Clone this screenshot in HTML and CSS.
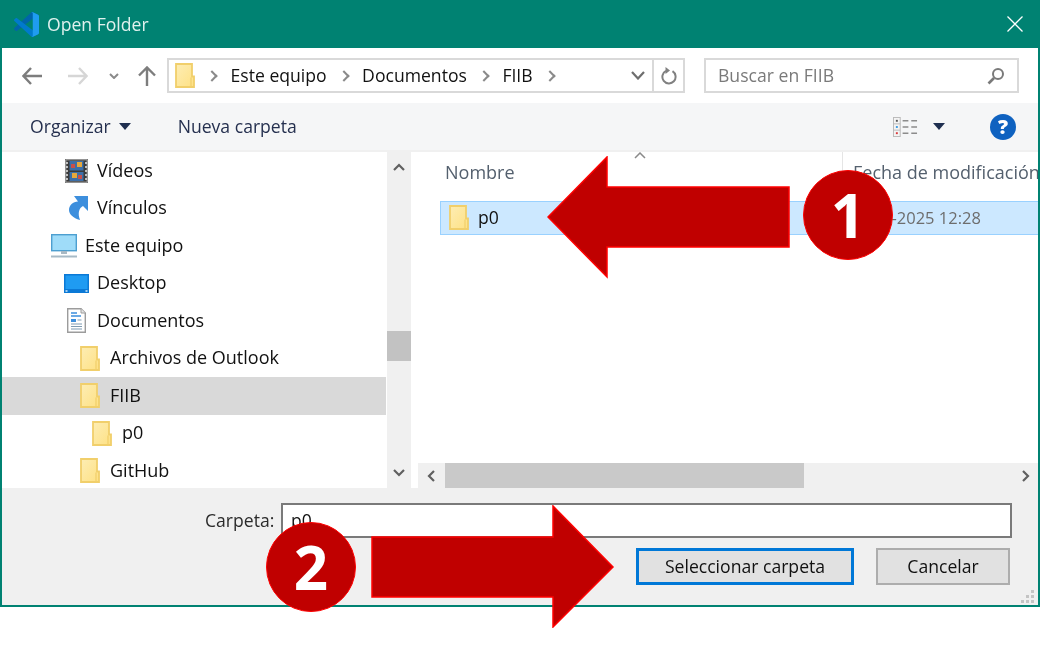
FILE: index.html
```html
<!DOCTYPE html>
<html lang="es">

<head>
    <meta charset="UTF-8">
    <meta name="viewport" content="width=device-width, initial-scale=1.0">
    <title>Open Folder</title>
    <link rel="stylesheet" href="styles.css">
</head>

<body>
    <svg class="defs" width="0" height="0" aria-hidden="true">
        <linearGradient id="folderFill" x1="0" y1="0" x2="1" y2="1">
            <stop offset="0" stop-color="#fdedb4"/>
            <stop offset="1" stop-color="#fee184"/>
        </linearGradient>
        <symbol id="folder" viewBox="0 0 20 25">
            <path d="M1 1H17V13.500H19V24H1Z" fill="url(#folderFill)" stroke="#f1cf6b" stroke-width="1.800"/>
            <path d="M16 14.500V23" stroke="#f1cf6b" stroke-width="1.200"/>
        </symbol>
    </svg>

    <div class="dialog">
        <div class="titlebar">
            <svg class="app-logo" viewBox="0 0 100 100">
                <path fill="#0065A9" d="M96.46 10.8 75.86.88C73.47-.27 70.62.21 68.75 2.08L1.3 63.58c-1.82 1.66-1.81 4.51 0 6.16l5.51 5.01c1.49 1.35 3.72 1.45 5.32.24L93.36 13.37C96.09 11.3 100 13.25 100 16.67v-.24c0-2.4-1.38-4.59-3.54-5.63Z"/>
                <path fill="#007ACC" d="M96.46 89.2 75.86 99.12c-2.39 1.15-5.24.67-7.11-1.2L1.3 36.42c-1.82-1.66-1.81-4.51 0-6.16l5.51-5.01c1.49-1.35 3.72-1.45 5.32-.24L93.36 86.63c2.73 2.07 6.64.12 6.64-3.3v.24c0 2.4-1.38 4.59-3.54 5.63Z"/>
                <path fill="#1F9CF0" d="M75.86 99.13c-2.39 1.15-5.24.66-7.11-1.21C71.06 100.22 75 98.59 75 95.33V4.67C75 1.41 71.06-.22 68.75 2.08 70.62.21 73.47-.27 75.86.87l20.6 9.91C98.62 11.82 100 14.01 100 16.41v67.18c0 2.4-1.38 4.59-3.54 5.63Z"/>
            </svg>
            <span class="title">Open Folder</span>
            <svg class="close" viewBox="0 0 16 16"><path d="M.5.5 15.500 15.500M15.500.5.5 15.500" stroke="#fff" stroke-width="1.300" fill="none"/></svg>
        </div>

        <div class="addressbar">
            <svg class="nav-btn back" viewBox="0 0 20 18"><path d="M9 1 1.500 9 9 17M2 9H20" stroke="#7d7d7d" stroke-width="2.400" fill="none"/></svg>
            <svg class="nav-btn forward" viewBox="0 0 20 18"><path d="M11 1 18.500 9 11 17M18 9H0" stroke="#d6d6d6" stroke-width="2.400" fill="none"/></svg>
            <svg class="nav-btn recent" viewBox="0 0 10 6"><path d="M1 1 5 5 9 1" stroke="#8a8a8a" stroke-width="2" fill="none"/></svg>
            <svg class="nav-btn up" viewBox="0 0 18 20"><path d="M1 9.500 9 1.500 17 9.500M9 2V20" stroke="#7d7d7d" stroke-width="2.400" fill="none"/></svg>

            <div class="crumbs">
                <svg class="crumb-folder"><use href="#folder"/></svg>
                <span class="sep"></span>
                <span class="crumb">Este equipo</span>
                <span class="sep"></span>
                <span class="crumb">Documentos</span>
                <span class="sep"></span>
                <span class="crumb">FIIB</span>
                <span class="sep"></span>
                <svg class="crumb-drop" viewBox="0 0 14 9"><path d="M1 1 7 7.500 13 1" stroke="#6e6e6e" stroke-width="2.200" fill="none"/></svg>
                <span class="refresh">
                    <svg viewBox="0 0 16 18" width="16" height="18"><path d="M11.500 4.200A6.600 6.600 0 1 1 5 3.900" stroke="#808080" stroke-width="2" fill="none"/><path d="M4.500 0V7L9 3.500Z" fill="#808080"/></svg>
                </span>
            </div>

            <div class="search">
                <span class="search-text">Buscar en FIIB</span>
                <svg viewBox="0 0 18 18" width="18" height="18"><circle cx="11" cy="7" r="5" stroke="#7a7a7a" stroke-width="2" fill="none"/><path d="M7 11 1.500 16.500" stroke="#7a7a7a" stroke-width="2.600"/></svg>
            </div>
        </div>

        <div class="toolbar">
            <button class="tool">Organizar<i class="caret"></i></button>
            <button class="tool new-folder">Nueva carpeta</button>
            <svg class="view-icon" viewBox="0 0 26 21" preserveAspectRatio="none">
                <rect x=".5" y=".5" width="7" height="20" fill="#f4f4f4" stroke="#b9b9b9"/>
                <path d="M.5 7.200h7M.5 13.800h7" stroke="#b9b9b9"/>
                <rect x="3" y="3" width="2" height="2" fill="#555"/>
                <rect x="3" y="9.500" width="2" height="2" fill="#3c9be0"/>
                <rect x="3" y="16" width="2" height="2" fill="#d8383a"/>
                <path d="M10 4h6M19 4h6M10 10.500h6M19 10.500h6M10 17h6M19 17h6" stroke="#8c8c8c" stroke-width="1.600"/>
            </svg>
            <i class="caret view-caret"></i>
            <span class="help">?</span>
        </div>

        <div class="panes">
            <div class="nav-pane">
                <div class="tree-row depth-1">
                    <svg class="tree-icon ic-video" viewBox="0 0 23 24">
                        <rect width="23" height="24" fill="#3b3b3b"/>
                        <rect x=".8" y=".8" width="21.400" height="22.400" fill="none" stroke="#b8b8b8"/>
                        <rect x="4.500" y="2" width="14" height="9.500" fill="#3d6fa8"/>
                        <rect x="4.500" y="13" width="14" height="9" fill="#3d6fa8"/>
                        <path d="M12 3h5v5h-5ZM7 14h5v5H7Z" fill="#e7a83c"/>
                        <path d="M6 5h4v4H6ZM13 16h4v4h-4Z" fill="#c9504b"/>
                        <path d="M2 3v18M21 3v18" stroke="#e8e8e8" stroke-width="1.500" stroke-dasharray="2 2"/>
                    </svg>
                    <span>Vídeos</span>
                </div>
                <div class="tree-row depth-1">
                    <svg class="tree-icon ic-link" viewBox="0 0 19 24">
                        <path d="M19 0V15L14 10C10 12 8.500 17 11 24 4 22 0 18 0 14 0 9 4 6 9 5.500L5 0Z" fill="#3d8fdd"/>
                    </svg>
                    <span>Vínculos</span>
                </div>
                <div class="tree-row depth-0">
                    <svg class="tree-icon ic-pc" viewBox="0 0 26 24">
                        <rect x=".7" y=".7" width="24.600" height="16" fill="#9fdcf9" stroke="#4d9fd0" stroke-width="1.400"/>
                        <path d="M10 17h6v3h-6Z" fill="#a9b9c4"/>
                        <path d="M0 21.500h26v2H0Z" fill="#a7bac6"/>
                    </svg>
                    <span>Este equipo</span>
                </div>
                <div class="tree-row depth-1">
                    <svg class="tree-icon ic-desktop" viewBox="0 0 25 19">
                        <rect width="25" height="19" fill="#0b79d6"/>
                        <rect x="1.500" y="1.500" width="22" height="13.500" fill="#1f9bf2"/>
                        <path d="M1.500 17h2M21.500 17h2" stroke="#d5ecfb" stroke-width="1.400"/>
                    </svg>
                    <span>Desktop</span>
                </div>
                <div class="tree-row depth-1">
                    <svg class="tree-icon ic-doc" viewBox="0 0 19 25">
                        <path d="M.7.7H14L18.300 5V24.300H.7Z" fill="#fff" stroke="#9c9c9c" stroke-width="1.400"/>
                        <path d="M14 .7V5H18.300" fill="#e6e6e6" stroke="#9c9c9c"/>
                        <path d="M4 5h6M4 8h10" stroke="#3d8fdd" stroke-width="1.400"/>
                        <path d="M4 11h5v3H4Z" fill="#3d8fdd"/>
                        <path d="M10.500 12h4M4 16h11M4 18.500h11M4 21h11" stroke="#7f9cb3" stroke-width="1.200"/>
                    </svg>
                    <span>Documentos</span>
                </div>
                <div class="tree-row depth-2">
                    <svg class="tree-icon ic-folder"><use href="#folder"/></svg>
                    <span>Archivos de Outlook</span>
                </div>
                <div class="tree-row depth-2 active">
                    <svg class="tree-icon ic-folder"><use href="#folder"/></svg>
                    <span>FIIB</span>
                </div>
                <div class="tree-row depth-3">
                    <svg class="tree-icon ic-folder"><use href="#folder"/></svg>
                    <span>p0</span>
                </div>
                <div class="tree-row depth-2">
                    <svg class="tree-icon ic-folder"><use href="#folder"/></svg>
                    <span>GitHub</span>
                </div>
            </div>

            <div class="vscroll">
                <svg class="arrow-btn" viewBox="0 0 12 8" width="12" height="8"><path d="M1 7 6 2 11 7" stroke="#606060" stroke-width="2.200" fill="none"/></svg>
                <div class="vtrack"><div class="vthumb"></div></div>
                <svg class="arrow-btn" viewBox="0 0 12 8" width="12" height="8"><path d="M1 1 6 6 11 1" stroke="#606060" stroke-width="2.200" fill="none"/></svg>
            </div>

            <div class="list-pane">
                <div class="list">
                    <div class="list-head">
                        <div class="col-name">Nombre
                            <svg class="sort" viewBox="0 0 12 7" width="12" height="7"><path d="M1 6 6 1 11 6" stroke="#8a8a8a" stroke-width="1.500" fill="none"/></svg>
                        </div>
                        <div class="col-date">Fecha de modificación</div>
                    </div>
                    <div class="list-row">
                        <svg class="row-folder"><use href="#folder"/></svg>
                        <span class="row-name">p0</span>
                        <span class="row-date">-2025 12:28</span>
                    </div>
                </div>
                <div class="hscroll">
                    <svg class="arrow-btn" viewBox="0 0 8 12" width="8" height="12"><path d="M7 1 2 6 7 11" stroke="#606060" stroke-width="2.200" fill="none"/></svg>
                    <div class="htrack"><div class="hthumb"></div></div>
                    <svg class="arrow-btn" viewBox="0 0 8 12" width="8" height="12"><path d="M1 1 6 6 1 11" stroke="#606060" stroke-width="2.200" fill="none"/></svg>
                </div>
            </div>
        </div>

        <div class="footer">
            <div class="folder-line">
                <label for="folderName">Carpeta:</label>
                <input type="text" id="folderName" value="p0">
            </div>
            <div class="buttons">
                <button class="btn btn-primary">Seleccionar carpeta</button>
                <button class="btn btn-cancel">Cancelar</button>
            </div>
            <svg class="grip" viewBox="0 0 14 14" width="14" height="14"><path d="M10 1h3v3h-3ZM5 6h3v3H5ZM10 6h3v3h-3ZM0 11h3v3H0ZM5 11h3v3H5ZM10 11h3v3h-3Z" fill="#c4c4c4"/></svg>
        </div>
    </div>

    <!-- annotations drawn over the dialog -->
    <svg class="arrow arrow-one" viewBox="0 0 244 123"><polygon points="1,61 60,1 60,31 242,31 242,91 60,91 60,121" fill="#c00000" stroke="#f00" stroke-width="1.500"/></svg>
    <div class="step step-one">1</div>
    <svg class="arrow arrow-two" viewBox="0 0 244 123"><polygon points="1,32 182,32 182,1 242,62 182,122 182,92 1,92" fill="#c00000" stroke="#f00" stroke-width="1.500"/></svg>
    <div class="step step-two">2</div>
</body>

</html>
```

FILE: styles.css
```css
html,
body {
    margin: 0;
    background: #fff;
}

body {
    position: relative;
    width: 1040px;
    height: 648px;
    overflow: hidden;
    font-family: "Open Sans", "Noto Sans", sans-serif;
    font-size: 17.6px;
    color: #111;
}

.defs {
    position: absolute;
}

.dialog {
    width: 1040px;
    height: 607px;
    box-sizing: border-box;
    display: flex;
    flex-direction: column;
    border: 2px solid #008272;
    border-top: none;
    background: #f0f0f0;
    filter: blur(0.4px);
}

/* title */
.titlebar {
    height: 48px;
    flex: none;
    margin: 0 -2px;
    display: flex;
    align-items: center;
    background: #008272;
    color: #dff1ee;
}

.app-logo {
    width: 25px;
    height: 25px;
    margin-left: 14px;
}

.title {
    margin-left: 8px;
}

.close {
    width: 16px;
    height: 16px;
    margin-left: auto;
    margin-right: 17px;
}

/* address row */
.addressbar {
    height: 55px;
    flex: none;
    display: flex;
    align-items: center;
    background: #fff;
}

.nav-btn {
    flex: none;
}

.back {
    width: 20px;
    height: 18px;
    margin-left: 20px;
}

.forward {
    width: 20px;
    height: 18px;
    margin-left: 26px;
}

.recent {
    width: 10px;
    height: 6px;
    margin-left: 21px;
}

.up {
    width: 18px;
    height: 20px;
    margin-left: 19px;
}

.crumbs {
    width: 518px;
    height: 35px;
    box-sizing: border-box;
    margin-left: 11px;
    display: flex;
    align-items: center;
    border: 2px solid #d9d9d9;
    padding-left: 6px;
}

.crumb-folder {
    width: 20px;
    height: 25px;
}

.crumb,
.search-text {
    padding-bottom: 2px;
}

.sep {
    width: 6px;
    height: 6px;
    margin: 0 14.5px 0 13px;
    border-top: 2px solid #8a8a8a;
    border-right: 2px solid #8a8a8a;
    transform: rotate(45deg);
}

.crumb-drop {
    width: 14px;
    height: 9px;
    margin-left: auto;
    margin-right: 7px;
}

.refresh {
    width: 31px;
    height: 100%;
    box-sizing: border-box;
    display: flex;
    align-items: center;
    justify-content: center;
    border-left: 2px solid #d9d9d9;
}

.search {
    width: 315px;
    height: 35px;
    box-sizing: border-box;
    margin-left: 19px;
    display: flex;
    align-items: center;
    justify-content: space-between;
    border: 2px solid #d9d9d9;
    padding: 0 12px 0 12px;
    color: #7a7a7a;
}

/* command row */
.toolbar {
    height: 47px;
    flex: none;
    display: flex;
    align-items: center;
    background: #f5f6f7;
    color: #25304f;
}

.tool {
    display: flex;
    align-items: center;
    padding: 0 0 2px;
    border: none;
    background: none;
    font: inherit;
    color: inherit;
}

.tool:first-child {
    margin-left: 28px;
}

.new-folder {
    margin-left: 47px;
}

.caret {
    width: 0;
    height: 0;
    margin: 2px 0 0 8px;
    border-left: 6.5px solid transparent;
    border-right: 6.5px solid transparent;
    border-top: 7px solid #1f2f50;
}

.view-icon {
    width: 25px;
    height: 20px;
    margin-left: auto;
}

.view-caret {
    margin: 0 0 0 15px;
    border-left-width: 6px;
    border-right-width: 6px;
}

.help {
    width: 26px;
    height: 26px;
    margin: 0 22px 0 45px;
    display: flex;
    align-items: center;
    justify-content: center;
    border-radius: 50%;
    background: #0f62c0;
    color: #fff;
    font-weight: 800;
    font-size: 20px;
}

/* navigation + list */
.panes {
    flex: 1;
    min-height: 0;
    display: flex;
    padding-top: 2px;
    background: #fff;
    box-shadow: inset 0 2px 0 #f0f0f0;
}

.nav-pane {
    width: 384px;
    flex: none;
    overflow: hidden;
    font-size: 18px;
}

.tree-row {
    height: 37.5px;
    display: flex;
    align-items: center;
    white-space: nowrap;
}

.tree-row > span {
    padding-bottom: 2px;
}

.tree-row.active {
    background: #d9d9d9;
}

.depth-0 {
    padding-left: 49px;
}

.depth-1 {
    padding-left: 61px;
}

.depth-2 {
    padding-left: 74px;
}

.depth-3 {
    padding-left: 86px;
}

.tree-icon {
    flex: none;
}

.ic-video {
    width: 23px;
    height: 24px;
    margin: 0 9px 0 2px;
}

.ic-link {
    width: 19px;
    height: 24px;
    margin: 0 9px 0 6px;
}

.ic-pc {
    width: 26px;
    height: 24px;
    margin-right: 8px;
}

.ic-desktop {
    width: 25px;
    height: 19px;
    margin: 0 8px 0 1px;
}

.ic-doc {
    width: 19px;
    height: 25px;
    margin: 0 11px 0 4px;
}

.ic-folder {
    width: 20px;
    height: 25px;
    margin: 0 10px 0 4px;
}

.vscroll {
    width: 24px;
    flex: none;
    margin-left: 1px;
    display: flex;
    flex-direction: column;
    align-items: center;
    background: #f0f0f0;
}

.arrow-btn {
    flex: none;
    margin: 11px 0;
}

.vtrack {
    flex: 1;
    width: 100%;
}

.vthumb {
    height: 30px;
    margin-top: 149px;
    background: #c2c2c2;
}

.list-pane {
    flex: 1;
    min-width: 0;
    margin-left: 7px;
    display: flex;
    flex-direction: column;
}

.list {
    flex: 1;
    min-height: 0;
    overflow: hidden;
}

.list-head {
    height: 38px;
    display: flex;
    color: #54606e;
    font-size: 18px;
}

.col-name {
    width: 425px;
    flex: none;
    position: relative;
    box-sizing: border-box;
    padding: 8px 0 0 27px;
    border-right: 1px solid #e5e5e5;
}

.sort {
    position: absolute;
    top: 0;
    left: 216px;
}

.col-date {
    padding: 8px 0 0 10px;
    white-space: nowrap;
}

.list-row {
    width: 640px;
    height: 33.5px;
    box-sizing: border-box;
    margin: 11px 0 0 22px;
    display: flex;
    align-items: center;
    background: #cce8ff;
    border: 1.5px solid #99d1ff;
}

.row-folder {
    width: 20px;
    height: 25px;
    flex: none;
    margin-left: 8px;
}

.row-name {
    width: 413.5px;
    flex: none;
    margin-left: 9px;
    padding-bottom: 2px;
}

.row-date {
    padding-bottom: 1px;
    color: #6d6d6d;
    font-size: 16.5px;
    white-space: nowrap;
}

.hscroll {
    height: 25px;
    flex: none;
    display: flex;
    align-items: center;
    background: #f0f0f0;
}

.hscroll .arrow-btn {
    margin: 0 6px 0 9px;
}

.hscroll .arrow-btn:last-child {
    margin: 0 8px 0 0;
}

.htrack {
    flex: 1;
    height: 100%;
}

.hthumb {
    width: 359px;
    height: 100%;
    margin-left: 4px;
    background: #c9c9c9;
}

/* bottom */
.footer {
    height: 117px;
    flex: none;
    position: relative;
    box-sizing: border-box;
    padding-top: 15px;
}

.folder-line {
    display: flex;
    align-items: center;
    padding-left: 203px;
}

.folder-line label {
    width: 68px;
    padding-bottom: 2px;
    color: #2b2b2b;
}

.folder-line input {
    width: 731px;
    height: 35px;
    box-sizing: border-box;
    margin-left: 8px;
    padding: 0 8px 2px;
    border: 2px solid #7a7a7a;
    outline: none;
    font: inherit;
    color: #111;
}

.buttons {
    display: flex;
    margin-top: 10px;
    padding-left: 634px;
}

.btn {
    height: 37px;
    box-sizing: border-box;
    padding: 0 0 2px;
    background: #e1e1e1;
    font: inherit;
    color: #111;
}

.btn-primary {
    width: 218px;
    border: 3px solid #0078d7;
}

.btn-cancel {
    width: 134px;
    margin-left: 22px;
    border: 2px solid #adadad;
}

.grip {
    position: absolute;
    right: 3px;
    bottom: 2px;
}

/* annotations */
.arrow {
    position: absolute;
    width: 244px;
    height: 123px;
}

.arrow-one {
    left: 547px;
    top: 156px;
}

.arrow-two {
    left: 371px;
    top: 505px;
}

.step {
    position: absolute;
    width: 90px;
    height: 90px;
    box-sizing: border-box;
    display: flex;
    align-items: center;
    justify-content: center;
    border: 1.5px solid #f00;
    border-radius: 50%;
    background: #c00000;
    color: #fff;
    font-weight: 700;
    font-size: 60px;
}

.step-one {
    left: 803px;
    top: 170px;
}

.step-two {
    left: 266px;
    top: 522px;
}
```
